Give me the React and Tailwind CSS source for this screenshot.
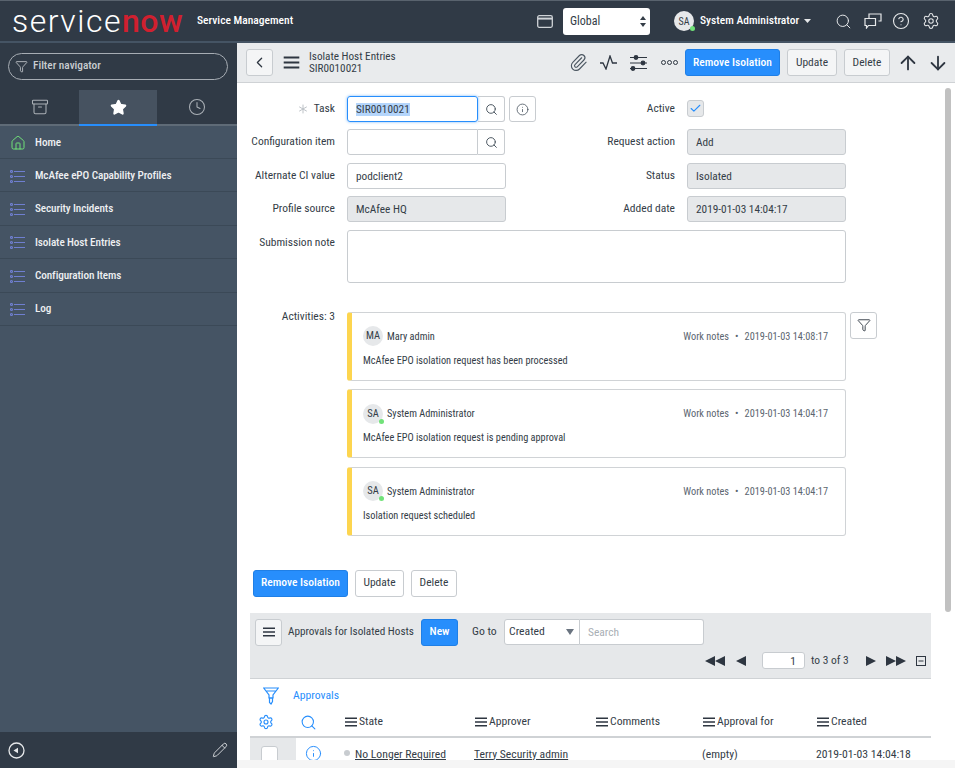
import React from "react"
import {
  Archive,
  Star,
  Clock,
  Funnel,
  ChevronLeft,
  Paperclip,
  Search,
  CircleHelp,
  Settings,
  Info,
  Check,
  ArrowUp,
  ArrowDown,
  House,
  Pencil,
  Asterisk,
} from "lucide-react"

const navItems = [
  "McAfee ePO Capability Profiles",
  "Security Incidents",
  "Isolate Host Entries",
  "Configuration Items",
  "Log",
]

const activities = [
  {
    initials: "MA",
    name: "Mary admin",
    date: "2019-01-03 14:08:17",
    text: "McAfee EPO isolation request has been processed",
    online: false,
  },
  {
    initials: "SA",
    name: "System Administrator",
    date: "2019-01-03 14:04:17",
    text: "McAfee EPO isolation request is pending approval",
    online: true,
  },
  {
    initials: "SA",
    name: "System Administrator",
    date: "2019-01-03 14:04:17",
    text: "Isolation request scheduled",
    online: true,
  },
]

const ListIcon = () => (
  <svg width="15" height="13" viewBox="0 0 15 13" fill="none" stroke="#6f7fd0" strokeWidth="1.1">
    <circle cx="1.5" cy="1.5" r="1" />
    <circle cx="1.5" cy="6.5" r="1" />
    <circle cx="1.5" cy="11.5" r="1" />
    <path d="M4 1.5h11M4 6.5h11M4 11.5h11" />
  </svg>
)

const Bars = ({ w = 12, h = 10, stroke = 1.6 }) => (
  <svg width={w} height={h} viewBox="0 0 12 10" stroke="#2e3641" strokeWidth={stroke}>
    <path d="M0 1.2h12M0 5h12M0 8.8h12" />
  </svg>
)

const ColumnHead = ({ label, className }) => (
  <div className={`flex items-center gap-[2px] ${className}`}>
    <Bars />
    <span>{label}</span>
  </div>
)

const Button = ({ children, primary, className = "" }) => (
  <div
    className={`flex items-center justify-center h-[27px] rounded-[3px] border text-[11.5px] whitespace-nowrap ${
      primary
        ? "bg-[#278efc] border-[#1f7fe6] text-white font-medium"
        : "border-[#c8ccd0] text-[#343d47]"
    } ${className}`}
  >
    {children}
  </div>
)

const Label = ({ children, className = "" }) => (
  <div className={`w-[98px] text-right text-[11.5px] leading-[25px] text-[#343d47] whitespace-nowrap ${className}`}>
    {children}
  </div>
)

const Value = ({ children, readOnly, className = "" }) => (
  <div
    className={`h-[26px] rounded-[3px] border border-[#c8ccd0] pl-[8px] text-[11.3px] leading-[25px] text-[#343d47] ${
      readOnly ? "bg-[#e6e8ea]" : "bg-white"
    } ${className}`}
  >
    {children}
  </div>
)

const LookupField = ({ focused, value }) => (
  <div className="flex w-[158px] h-[26px]">
    <div
      className={`w-[131px] h-[26px] rounded-l-[3px] border pl-[8px] text-[11.3px] leading-[25px] text-[#343d47] ${
        focused ? "border-[#278efc] shadow-[0_0_3px_#7db8f5] rounded-r-[3px]" : "border-[#c8ccd0]"
      }`}
    >
      {value && <span className="bg-[#b4d5fb]">{value}</span>}
    </div>
    <div className="flex items-center justify-center w-[27px] rounded-r-[3px] border border-l-0 border-[#c8ccd0]">
      <Search size={13} color="#4a5560" strokeWidth={1.8} />
    </div>
  </div>
)

const FormRow = ({ label, required, left, rightLabel, right }) => (
  <div className="flex h-[26px]">
    <div className="flex w-[340px] gap-[12px]">
      <Label className="relative">
        {required && (
          <Asterisk size={16} color="#b8bdc3" strokeWidth={1.4} className="absolute left-[58px] top-[5px]" />
        )}
        {label}
      </Label>
      {left}
    </div>
    <div className="flex gap-[12px]">
      <Label>{rightLabel}</Label>
      {right}
    </div>
  </div>
)

const ActivityCard = ({ item }) => (
  <div className="h-[69px] w-[499px] rounded-[3px] border border-[#d0d3d6] border-l-[5px] border-l-[#fdd54f] pl-[11px] pr-[17px] pt-[13px]">
    <div className="flex items-center h-[22px] text-[10.3px] text-[#343d47]">
      <div className="relative flex items-center justify-center w-[20px] h-[20px] rounded-full bg-[#e6e8ea] text-[10.5px] -mt-[1px]">
        {item.initials}
        {item.online && (
          <span className="absolute right-[-1px] bottom-[0px] w-[5px] h-[5px] rounded-full bg-[#71e279]" />
        )}
      </div>
      <span className="ml-[4px]">{item.name}</span>
      <span className="ml-auto text-[#5c6670]">Work notes</span>
      <span className="mx-[6px] text-[#5c6670]">•</span>
      <span className="text-[#5c6670]">{item.date}</span>
    </div>
    <div className="mt-[5px] text-[10.3px] leading-[16px] text-[#343d47]">{item.text}</div>
  </div>
)

const Triangle = ({ flip }) => (
  <svg width="10" height="10" viewBox="0 0 10 10" fill="#2e3641">
    <path d={flip ? "M0 0l10 5-10 5z" : "M10 0L0 5l10 5z"} />
  </svg>
)

const App = () => {
  return (
    <div
      className="w-[955px] h-[768px] overflow-hidden flex flex-col text-[#343d47] font-stretch-condensed"
      style={{ fontFamily: "Roboto, 'Noto Sans', sans-serif" }}
    >
      {/* top banner */}
      <header className="flex items-center h-[43px] bg-[#303a46] border-t border-t-[#59636e] border-b-2 border-b-[#455464]">
        <div className="ml-[12px] w-[175px] text-[32px] leading-[38px] text-white font-light whitespace-nowrap font-stretch-normal">
          <span className="tracking-[1.5px]">service</span>
          <span className="text-[#d0202f] font-medium tracking-[0.5px]">now</span>
        </div>
        <div className="ml-[10px] text-[11.5px] font-medium text-white whitespace-nowrap">Service Management</div>
        <svg className="ml-auto" width="16" height="13" viewBox="0 0 16 13" fill="none" stroke="#cfd3d7" strokeWidth="1.3">
          <rect x="0.7" y="0.7" width="14.6" height="11.6" rx="1.5" />
          <path d="M1 3.6h14" strokeWidth="2" />
        </svg>
        <div className="flex items-center justify-between ml-[10px] w-[87px] h-[27px] rounded-[3px] bg-white pl-[7px] pr-[4px] text-[12px] text-[#343d47]">
          Global
          <svg width="6" height="11" viewBox="0 0 6 11" fill="#343d47">
            <path d="M3 0l3 4H0zM3 11L0 7h6z" />
          </svg>
        </div>
        <div className="relative flex items-center justify-center ml-[24px] w-[20px] h-[20px] rounded-full bg-[#e6e8ea] text-[10px] text-[#343d47]">
          SA
          <span className="absolute right-[-1px] bottom-[0px] w-[5px] h-[5px] rounded-full bg-[#71e279]" />
        </div>
        <span className="ml-[6px] w-[98px] text-[11.5px] font-medium text-white whitespace-nowrap">System Administrator</span>
        <svg className="ml-[6px]" width="7" height="4" viewBox="0 0 7 4" fill="#e6e8ea">
          <path d="M0 0h7L3.5 4z" />
        </svg>
        <Search className="ml-[24px]" size={17} color="#e6e8ea" strokeWidth={1.4} />
        <svg className="ml-[12px]" width="18" height="16" viewBox="0 0 18 16" fill="none" stroke="#e6e8ea" strokeWidth="1.2">
          <path d="M1 5.5h10.5v7H4.5L2.500 15v-2.500H1z" />
          <path d="M5 5V1h12v7h-2.500" />
        </svg>
        <CircleHelp className="ml-[10px]" size={18} color="#e6e8ea" strokeWidth={1.5} />
        <Settings className="ml-[12px] mr-[15px]" size={18} color="#e6e8ea" strokeWidth={1.4} />
      </header>

      <div className="flex flex-1 min-h-0">
        {/* left navigator */}
        <aside className="flex flex-col w-[237px] bg-[#455464]">
          <div className="h-[47px] bg-[#303a46] pl-[8px] pt-[10px]">
            <div className="flex items-center w-[220px] h-[27px] rounded-full border border-[#a7adb4] pl-[6px] text-[11.3px] text-[#c9cdd1]">
              <Funnel size={13} color="#c9cdd1" strokeWidth={1.5} />
              <span className="ml-[5px] font-medium">Filter navigator</span>
            </div>
          </div>
          <div className="flex h-[36px] bg-[#303a46] border-b-2 border-b-[#5f6b77]">
            <div className="flex items-center justify-center w-[79px]">
              <Archive size={18} color="#aab0b6" strokeWidth={1.4} />
            </div>
            <div className="flex items-center justify-center w-[78px] h-[36px] bg-[#465260] border-b-2 border-b-[#278efc]">
              <Star size={17} color="#ffffff" fill="#ffffff" />
            </div>
            <div className="flex items-center justify-center w-[80px]">
              <Clock size={18} color="#aab0b6" strokeWidth={1.4} />
            </div>
          </div>
          <div className="flex items-center h-[33px] border-b border-b-[#3b4957] pl-[10px] pt-[2px]">
            <House size={16} color="#71e279" strokeWidth={1.5} />
            <span className="ml-[9px] text-[11.2px] font-medium text-[#eef0f2]">Home</span>
          </div>
          {navItems.map((name) => (
            <div key={name} className="flex items-center h-[33.4px] border-b border-b-[#3b4957] pl-[10px] pt-[2px]">
              <ListIcon />
              <span className="ml-[10px] text-[11.2px] tracking-[-0.1px] font-medium text-[#eef0f2] whitespace-nowrap">{name}</span>
            </div>
          ))}
          <div className="flex items-center justify-between mt-auto h-[36px] bg-[#303a46] pl-[8px] pr-[9px]">
            <svg width="17" height="17" viewBox="0 0 17 17" fill="none" stroke="#e6e8ea" strokeWidth="1.3">
              <circle cx="8.500" cy="8.500" r="7.500" />
              <path d="M5.500 8.500l4.500-2.700v5.400z" fill="#e6e8ea" stroke="none" />
            </svg>
            <Pencil size={16} color="#e6e8ea" strokeWidth={1.3} />
          </div>
        </aside>

        {/* form pane */}
        <main className="flex flex-col flex-1 min-w-0 bg-white">
          <div className="flex items-center h-[40px] shrink-0 bg-[#e9ebed] border-b border-b-[#cfd2d5] pl-[9px]">
            <div className="flex items-center justify-center w-[27px] h-[27px] rounded-[3px] border border-[#c8ccd0] bg-[#f4f5f6]">
              <ChevronLeft size={17} color="#2e3641" strokeWidth={1.8} />
            </div>
            <div className="ml-[10px]">
              <Bars w={17} h={13} />
            </div>
            <div className="ml-[9px] text-[11.2px] leading-[12px] text-[#343d47]">
              <div>Isolate Host Entries</div>
              <div>SIR0010021</div>
            </div>
            <Paperclip className="ml-auto" size={19} color="#4a5560" strokeWidth={1.4} />
            <svg className="ml-[12px]" width="17" height="15" viewBox="0 0 17 15" fill="none" stroke="#2e3641" strokeWidth="1.3">
              <path d="M0 8h3l3 6 4-13 2.500 7H17" />
            </svg>
            <svg className="ml-[13px]" width="17" height="16" viewBox="0 0 17 16" stroke="#2e3641" strokeWidth="1.2" fill="#2e3641">
              <path d="M0 2.500h17M0 8h17M0 13.500h17" fill="none" />
              <circle cx="6" cy="2.500" r="1.800" />
              <circle cx="13" cy="8" r="1.800" />
              <circle cx="3" cy="13.500" r="1.800" />
            </svg>
            <svg className="ml-[14px]" width="17" height="5" viewBox="0 0 17 5" fill="none" stroke="#2e3641" strokeWidth="1">
              <circle cx="2.500" cy="2.500" r="2" />
              <circle cx="8.500" cy="2.500" r="2" />
              <circle cx="14.500" cy="2.500" r="2" />
            </svg>
            <Button primary className="ml-[7px] w-[95px]">Remove Isolation</Button>
            <Button className="ml-[7px] w-[50px] bg-[#f4f5f6]">Update</Button>
            <Button className="ml-[7px] w-[46px] bg-[#f4f5f6]">Delete</Button>
            <ArrowUp className="ml-[7px]" size={22} color="#2e3641" strokeWidth={2} />
            <ArrowDown className="ml-[8px] mr-[6px]" size={22} color="#2e3641" strokeWidth={2} />
          </div>

          <div className="relative flex-1 min-h-0 overflow-hidden">
            {/* scrollbar */}
            <div className="absolute right-[4px] top-[5px] w-[6px] h-[524px] rounded-full bg-[#c1c1c1]" />

            <div className="flex flex-col gap-[7.4px] pt-[13px]">
              <FormRow
                label="Task"
                required
                left={
                  <div className="flex gap-[4px]">
                    <LookupField focused value="SIR0010021" />
                    <div className="flex items-center justify-center w-[27px] h-[26px] rounded-[3px] border border-[#c8ccd0]">
                      <Info size={13} color="#4a5560" strokeWidth={1.5} />
                    </div>
                  </div>
                }
                rightLabel="Active"
                right={
                  <div className="flex items-center justify-center w-[17px] h-[17px] mt-[4px] rounded-[3px] border border-[#c8ccd0] bg-[#e6e8ea]">
                    <Check size={13} color="#278efc" strokeWidth={2} />
                  </div>
                }
              />
              <FormRow
                label="Configuration item"
                left={<LookupField />}
                rightLabel="Request action"
                right={<Value readOnly className="w-[159px]">Add</Value>}
              />
              <FormRow
                label="Alternate CI value"
                left={<Value className="w-[159px]">podclient2</Value>}
                rightLabel="Status"
                right={<Value readOnly className="w-[159px]">Isolated</Value>}
              />
              <FormRow
                label="Profile source"
                left={<Value readOnly className="w-[159px]">McAfee HQ</Value>}
                rightLabel="Added date"
                right={<Value readOnly className="w-[159px]">2019-01-03 14:04:17</Value>}
              />
              <div className="flex gap-[12px]">
                <Label>Submission note</Label>
                <div className="w-[499px] h-[53px] rounded-[3px] border border-[#c8ccd0]" />
              </div>
            </div>

            <div className="flex gap-[12px] mt-[29px]">
              <Label className="-mt-[8px]">Activities: 3</Label>
              <div className="flex flex-col gap-[8.5px]">
                {activities.map((item, i) => (
                  <ActivityCard key={i} item={item} />
                ))}
              </div>
              <div className="flex items-center justify-center w-[27px] h-[27px] -ml-[8px] rounded-[3px] border border-[#c8ccd0]">
                <Funnel size={14} color="#343d47" strokeWidth={1.6} />
              </div>
            </div>

            <div className="flex gap-[7px] mt-[34px] ml-[16px]">
              <Button primary className="w-[95px]">Remove Isolation</Button>
              <Button className="w-[49px]">Update</Button>
              <Button className="w-[46px]">Delete</Button>
            </div>

            {/* related list */}
            <div className="ml-[13px] w-[681px]">
              <div className="mt-[16px] h-[66px] bg-[#e6e8ea] border-b border-[#cfd2d5] pt-[6px] pl-[5px] pr-[5px]">
                <div className="flex items-center h-[27px] text-[11.7px]">
                  <div className="flex items-center justify-center w-[27px] h-[27px] rounded-[3px] border border-[#c8ccd0] bg-[#f4f5f6]">
                    <Bars />
                  </div>
                  <span className="ml-[6px] w-[126px] text-[11.2px] text-[#343d47] whitespace-nowrap">Approvals for Isolated Hosts</span>
                  <Button primary className="ml-[7px] w-[37px]">New</Button>
                  <span className="ml-[14px] w-[24px] whitespace-nowrap">Go to</span>
                  <div className="flex items-center justify-between ml-[8px] w-[76px] h-[26px] rounded-l-[3px] border border-[#c8ccd0] bg-white pl-[4px] pr-[5px]">
                    Created
                    <svg width="8" height="6" viewBox="0 0 8 6" fill="#6a7480"><path d="M0 0h8L4 6z" /></svg>
                  </div>
                  <div className="w-[124px] h-[26px] rounded-r-[3px] border border-l-0 border-[#c8ccd0] bg-white pl-[8px] text-[11.5px] leading-[25px] text-[#a9afb5]">
                    Search
                  </div>
                </div>
                <div className="flex items-center justify-end h-[20px] mt-[5px] text-[11.5px]">
                  <Triangle /><Triangle />
                  <div className="ml-[11px]"><Triangle /></div>
                  <div className="ml-[16px] w-[43px] h-[17px] rounded-[3px] border border-[#c8ccd0] bg-white pr-[8px] text-right leading-[16px]">1</div>
                  <span className="ml-[6px] w-[38px] whitespace-nowrap">to 3 of 3</span>
                  <div className="ml-[17px]"><Triangle flip /></div>
                  <div className="ml-[10px] flex"><Triangle flip /><Triangle flip /></div>
                  <svg className="ml-[10px]" width="10" height="10" viewBox="0 0 10 10" fill="none" stroke="#2e3641" strokeWidth="1">
                    <rect x="0.500" y="0.500" width="9" height="9" />
                    <path d="M2.500 5h5" />
                  </svg>
                </div>
              </div>

              <div className="flex items-center h-[32px] pl-[13px] pt-[2px]">
                <svg width="16" height="18" viewBox="0 0 16 18" fill="none" stroke="#278efc" strokeWidth="1.2">
                  <path d="M0.700 1h14.600L10 8v3H6V8zM2.500 4h11" />
                  <path d="M6.500 11h3v3.500L8 17l-1.500-1.500z" />
                </svg>
                <span className="ml-[14px] text-[11.7px] text-[#278efc]">Approvals</span>
              </div>

              <div className="relative flex items-center h-[27px] pb-[2px] border-b-2 border-b-[#cfd2d5] text-[11.7px] text-[#343d47]">
                <Settings className="ml-[8px]" size={16} color="#278efc" strokeWidth={1.7} />
                <Search className="ml-[26px]" size={17} color="#278efc" strokeWidth={1.5} />
                <ColumnHead label="State" className="absolute left-[95px]" />
                <ColumnHead label="Approver" className="absolute left-[225px]" />
                <ColumnHead label="Comments" className="absolute left-[346px]" />
                <ColumnHead label="Approval for" className="absolute left-[453px]" />
                <ColumnHead label="Created" className="absolute left-[567px]" />
              </div>

              <div className="relative flex items-center h-[34px] text-[11.7px] text-[#343d47]">
                <div className="w-[46px] h-[34px] bg-[#e6e8ea] pt-[8px] pl-[11px]">
                  <div className="w-[17px] h-[17px] rounded-[3px] border border-[#c8ccd0] bg-white" />
                </div>
                <Info className="ml-[9px] -mt-[2px]" size={17} color="#278efc" strokeWidth={1.4} />
                <span className="absolute left-[94px] top-[12px] w-[6px] h-[6px] rounded-full bg-[#c8ccd0]" />
                <span className="absolute left-[105px] top-[8px] underline underline-offset-1">No Longer Required</span>
                <span className="absolute left-[224px] top-[8px] underline underline-offset-1">Terry Security admin</span>
                <span className="absolute left-[452px] top-[8px]">(empty)</span>
                <span className="absolute left-[566px] top-[8px] whitespace-nowrap">2019-01-03 14:04:18</span>
              </div>
            </div>

            {/* bottom strip */}
            <div className="absolute left-0 right-0 bottom-0 h-[8px] bg-[#f5f5f5]" />
          </div>
        </main>
      </div>
    </div>
  )
}

export default App
